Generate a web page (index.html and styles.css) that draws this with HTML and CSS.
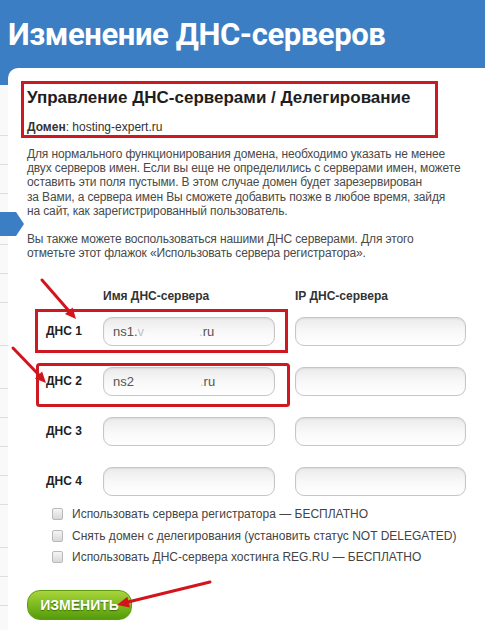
FILE: index.html
```html
<!DOCTYPE html>
<html lang="ru">
<head>
<meta charset="utf-8">
<title>Изменение ДНС-серверов</title>
<link rel="stylesheet" href="styles.css">
</head>
<body>
<div class="page">
  <header class="top">
    <h1 class="top__title">Изменение ДНС-серверов</h1>
  </header>
  <div class="layout">
    <ul class="side">
      <li class="side__item side__item--l"></li>
      <li class="side__item side__item--s"></li>
      <li class="side__item side__item--s"></li>
      <li class="side__item side__item--l"></li>
      <li class="side__item side__item--s"></li>
      <li class="side__item side__item--s"></li>
      <li class="side__item side__item--m"></li>
      <li class="side__item side__item--m"></li>
      <li class="side__item side__item--s"></li>
      <li class="side__item side__item--s"></li>
      <li class="side__item side__item--s"></li>
      <li class="side__item side__item--s"></li>
      <li class="side__item side__item--m"></li>
      <li class="side__item side__item--s"></li>
      <li class="side__item side__item--s"></li>
    </ul>
    <main class="panel">
      <div class="domain-box">
        <h2 class="domain-box__title">Управление ДНС-серверами / Делегирование</h2>
        <p class="domain-box__name"><b>Домен</b>: hosting-expert.ru</p>
      </div>
      <div class="content">
        <p class="note">Для нормального функционирования домена, необходимо указать не менее<br>двух серверов имен. Если вы еще не определились с серверами имен, можете<br>оставить эти поля пустыми. В этом случае домен будет зарезервирован<br>за Вами, а сервера имен Вы сможете добавить позже в любое время, зайдя<br>на сайт, как зарегистрированный пользователь.</p>
        <p class="note note--second">Вы также можете воспользоваться нашими ДНС серверами. Для этого<br>отметьте этот флажок «Использовать сервера регистратора».</p>

        <div class="dns-head">
          <span></span>
          <span class="dns-head__cell">Имя ДНС-сервера</span>
          <span class="dns-head__cell">IP ДНС-сервера</span>
        </div>
        <div class="dns-rows">
          <span class="dns-label">ДНС 1</span>
          <div class="field">ns1.<span class="field__fade">v</span><span class="field__hidden">ipserv</span><span class="field__fade">.</span>ru</div>
          <div class="field"></div>

          <span class="dns-label">ДНС 2</span>
          <div class="field">ns2<span class="field__hidden field__hidden--wide">ipserv</span><span class="field__fade">.</span>ru</div>
          <div class="field"></div>

          <span class="dns-label">ДНС 3</span>
          <div class="field"></div>
          <div class="field"></div>

          <span class="dns-label">ДНС 4</span>
          <div class="field"></div>
          <div class="field"></div>
        </div>

        <ul class="options">
          <li class="option"><input class="option__box" type="checkbox"><span>Использовать сервера регистратора — БЕСПЛАТНО</span></li>
          <li class="option"><input class="option__box" type="checkbox"><span>Снять домен с делегирования (установить статус NOT DELEGATED)</span></li>
          <li class="option"><input class="option__box" type="checkbox"><span>Использовать ДНС-сервера хостинга REG.RU — БЕСПЛАТНО</span></li>
        </ul>

        <button class="submit" type="button">ИЗМЕНИТЬ</button>
      </div>
    </main>
  </div>

  <svg class="marks" width="485" height="630" viewBox="0 0 485 630" aria-hidden="true">
    <path class="marks__tab" d="M0 212H16L24 224L16 236H0Z"/>
    <rect class="marks__box" x="36.5" y="310.5" width="250" height="41"/>
    <rect class="marks__box" x="37.5" y="364.5" width="251" height="41" rx="2"/>
    <line class="marks__line" x1="42" y1="280" x2="69" y2="311"/>
    <polygon class="marks__head" points="76,319 65,314 72.6,307.4"/>
    <line class="marks__line" x1="13" y1="348" x2="39" y2="375"/>
    <polygon class="marks__head" points="46,383 34.9,378.4 42.1,371.6"/>
    <line class="marks__line" x1="210" y1="582" x2="128" y2="602"/>
    <polygon class="marks__head" points="117,605 127.3,596.8 129.9,607.4"/>
  </svg>
</div>
</body>
</html>
```

FILE: styles.css
```css
* { box-sizing: border-box; }

html, body {
  margin: 0;
  padding: 0;
}

body {
  background: #fff;
  font-family: "Liberation Sans", Arial, sans-serif;
  color: #333;
}

.page {
  position: relative;
  width: 485px;
  height: 630px;
  overflow: hidden;
  background: #fafafa;
}

.top {
  height: 68px;
  padding: 16px 0 0 8px;
  background: #3c7ec4;
}

.top__title {
  margin: 0;
  font: 700 31px/37px Roboto, "Noto Sans", sans-serif;
  letter-spacing: -0.4px;
  color: #fff;
  white-space: nowrap;
}

.layout {
  display: grid;
  grid-template-columns: 8px 1fr;
  height: 562px;
  background: linear-gradient(#3c7ec4 0 17px, #f9f9f9 17px);
}

.side {
  list-style: none;
  margin: 17px 0 0;
  padding: 0;
}

.side__item {
  border-bottom: 1px solid #dedede;
}

.side__item--s { height: 29px; }
.side__item--m { height: 43px; }
.side__item--l { height: 51px; }

.panel {
  background: #fff;
  border-top-left-radius: 10px;
  padding: 13px 0 0 13px;
}

.domain-box {
  width: 417px;
  border: 3px solid #cd1a22;
  padding: 4px 3px 1px;
}

.domain-box__title {
  margin: 0 0 13px;
  font: 700 17px/19px "Liberation Sans", Arial, sans-serif;
  color: #1e1e1e;
  white-space: nowrap;
}

.domain-box__name {
  margin: 0;
  font-size: 12px;
  line-height: 14px;
  color: #333;
}

.content {
  padding-left: 6px;
}

.note {
  margin: 8.5px 0 0;
  font-size: 12px;
  line-height: 14.4px;
  letter-spacing: -0.13px;
  color: #4a4a4a;
  white-space: nowrap;
}

.note--second {
  margin-top: 13px;
}

.dns-head,
.dns-rows {
  display: grid;
  grid-template-columns: 56px 172px 171px;
  column-gap: 20px;
}

.dns-head {
  margin-top: 29px;
  font-weight: 700;
  font-size: 12px;
  line-height: 14px;
  color: #333;
}

.dns-rows {
  margin-top: 13.5px;
  row-gap: 21px;
}

.dns-label {
  align-self: center;
  padding-left: 19px;
  font-weight: 700;
  font-size: 12px;
  color: #222;
  white-space: nowrap;
}

.field {
  height: 29px;
  padding: 0 9px;
  border: 1px solid #c6c6c6;
  border-radius: 9px;
  background: linear-gradient(#ebebeb, #f9f9f9 55%, #fff);
  box-shadow: inset 0 1px 2px rgba(0, 0, 0, 0.07);
  font-size: 13px;
  line-height: 28px;
  color: #555;
  white-space: nowrap;
  overflow: hidden;
}

.field__fade {
  color: #c4c4c4;
}

.field__hidden {
  display: inline-block;
  width: 55px;
  color: transparent;
}

.field__hidden--wide {
  width: 66px;
}

.options {
  list-style: none;
  margin: 7.7px 0 0;
  padding: 0 0 0 25px;
}

.option {
  display: flex;
  align-items: center;
  gap: 9px;
  height: 21.5px;
  font-size: 12px;
  color: #444;
  white-space: nowrap;
}

.option__box {
  appearance: none;
  flex: none;
  width: 11px;
  height: 12px;
  margin: 0;
  border: 1px solid #b9b9b9;
  border-radius: 2px;
  background: linear-gradient(#f5f5f5, #d8d8d8);
}

.submit {
  display: block;
  width: 105px;
  height: 30px;
  margin-top: 21.8px;
  padding: 0;
  border: 1px solid #5e9d12;
  border-radius: 13px;
  background: linear-gradient(#a8d43c, #80bd22 45%, #559b0c);
  font: 700 14px/28px "Liberation Sans", Arial, sans-serif;
  color: #fff;
  text-shadow: 0 1px 1px #3b6c07;
}

.marks {
  position: absolute;
  left: 0;
  top: 0;
  pointer-events: none;
}

.marks__tab { fill: #3c7ec4; }

.marks__box {
  fill: none;
  stroke: #cd1a22;
  stroke-width: 3;
}

.marks__line {
  stroke: #d4141c;
  stroke-width: 3;
  stroke-linecap: round;
}

.marks__head { fill: #d4141c; }
```
